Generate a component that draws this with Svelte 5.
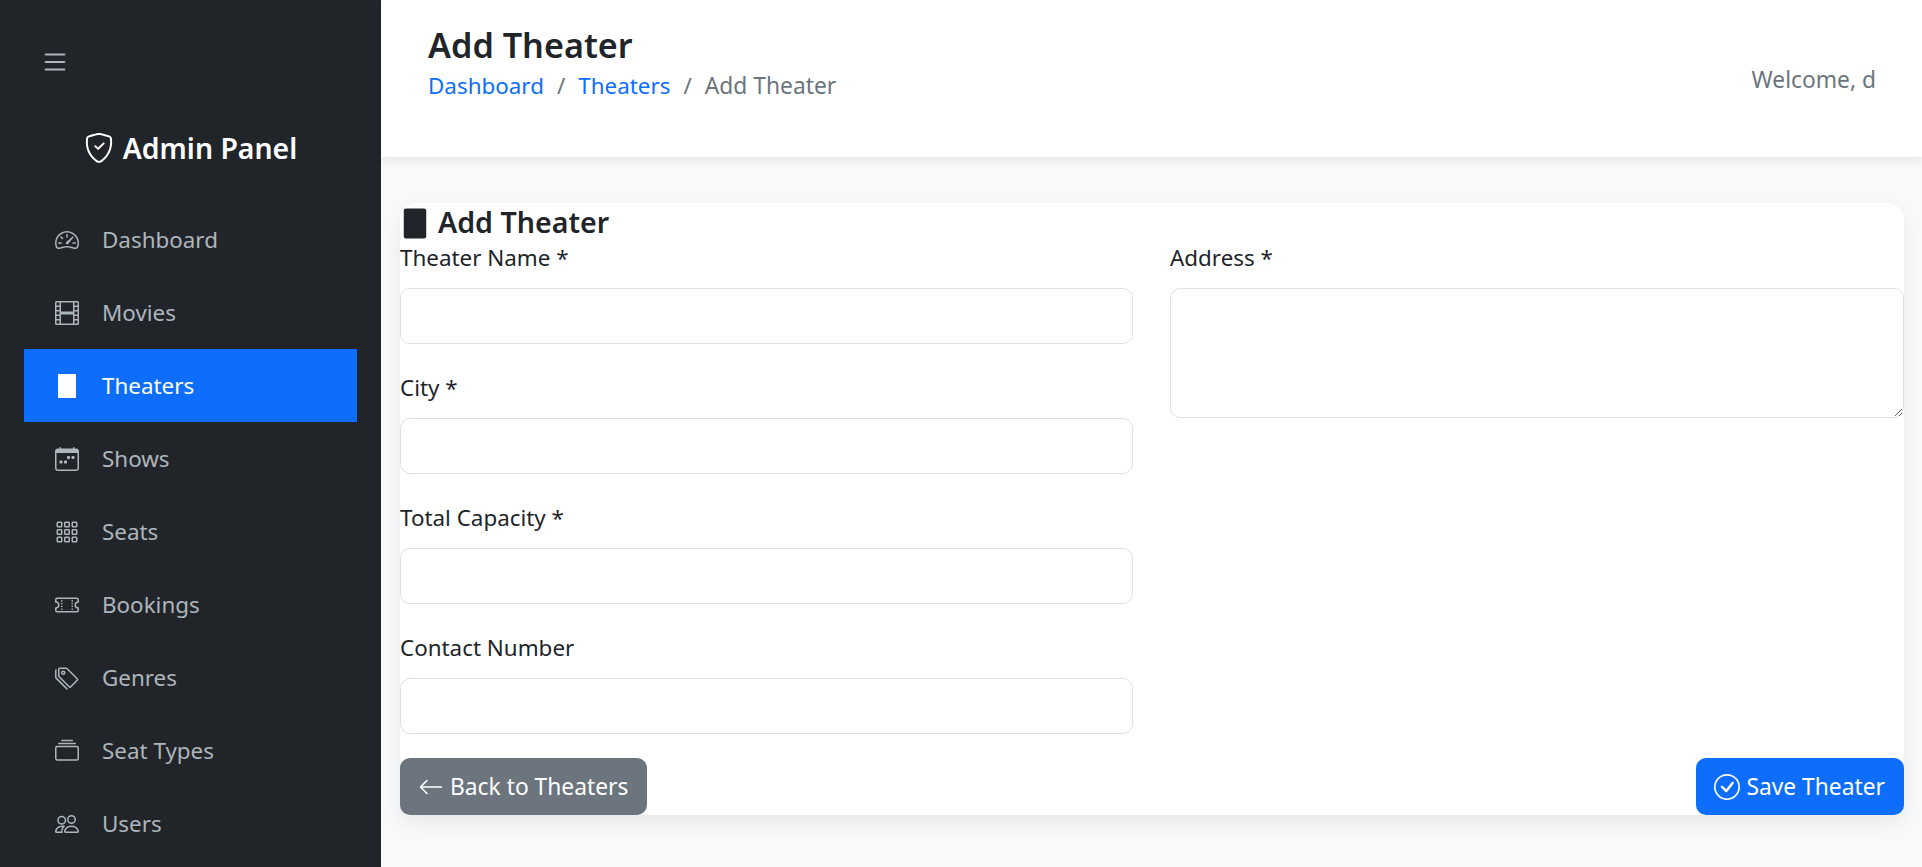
<script lang="ts">
  const NAV = [
    { label: 'Dashboard', paths: ['M8 4a.5.5 0 0 1 .5.5V6a.5.5 0 0 1-1 0V4.5A.5.5 0 0 1 8 4M3.732 5.732a.5.5 0 0 1 .707 0l.915.914a.5.5 0 1 1-.708.708l-.914-.915a.5.5 0 0 1 0-.707M2 10a.5.5 0 0 1 .5-.5h1.586a.5.5 0 0 1 0 1H2.5A.5.5 0 0 1 2 10m9.5 0a.5.5 0 0 1 .5-.5h1.5a.5.5 0 0 1 0 1H12a.5.5 0 0 1-.5-.5m.754-4.246a.39.39 0 0 0-.527-.02L7.547 9.31a.91.91 0 1 0 1.302 1.258l3.434-4.297a.39.39 0 0 0-.029-.518z', 'M0 10a8 8 0 1 1 15.547 2.661c-.442 1.253-1.845 1.602-2.932 1.25C11.309 13.488 9.475 13 8 13c-1.474 0-3.31.488-4.615.911-1.087.352-2.49.003-2.932-1.25A8 8 0 0 1 0 10m8-7a7 7 0 0 0-6.603 9.329c.203.575.923.876 1.68.63C4.397 12.533 6.358 12 8 12s3.604.532 4.923.96c.757.245 1.477-.056 1.68-.631A7 7 0 0 0 8 3'] },
    { label: 'Movies', paths: ['M0 1a1 1 0 0 1 1-1h14a1 1 0 0 1 1 1v14a1 1 0 0 1-1 1H1a1 1 0 0 1-1-1zm4 0v6h8V1zm8 8H4v6h8zM1 1v2h2V1zm2 3H1v2h2zM1 7v2h2V7zm2 3H1v2h2zm-2 3v2h2v-2zM15 1h-2v2h2zm-2 3v2h2V4zm2 3h-2v2h2zm-2 3v2h2v-2zm2 3h-2v2h2z'] },
    { label: 'Theaters', active: true, paths: ['M2.4 0h11.2a.4.4 0 0 1 .4.4v15.2a.4.4 0 0 1-.4.4H2.4a.4.4 0 0 1-.4-.4V.4a.4.4 0 0 1 .4-.4z'] },
    { label: 'Shows', paths: ['M11 6.5a.5.5 0 0 1 .5-.5h1a.5.5 0 0 1 .5.5v1a.5.5 0 0 1-.5.5h-1a.5.5 0 0 1-.5-.5zm-3 0a.5.5 0 0 1 .5-.5h1a.5.5 0 0 1 .5.5v1a.5.5 0 0 1-.5.5h-1a.5.5 0 0 1-.5-.5zm-5 3a.5.5 0 0 1 .5-.5h1a.5.5 0 0 1 .5.5v1a.5.5 0 0 1-.5.5h-1a.5.5 0 0 1-.5-.5zm3 0a.5.5 0 0 1 .5-.5h1a.5.5 0 0 1 .5.5v1a.5.5 0 0 1-.5.5h-1a.5.5 0 0 1-.5-.5z', 'M3.5 0a.5.5 0 0 1 .5.5V1h8V.5a.5.5 0 0 1 1 0V1h1a2 2 0 0 1 2 2v11a2 2 0 0 1-2 2H2a2 2 0 0 1-2-2V3a2 2 0 0 1 2-2h1V.5a.5.5 0 0 1 .5-.5M1 4v10a1 1 0 0 0 1 1h12a1 1 0 0 0 1-1V4z'] },
    { label: 'Seats', paths: ['M4 2v2H2V2zm1 12v-2a1 1 0 0 0-1-1H2a1 1 0 0 0-1 1v2a1 1 0 0 0 1 1h2a1 1 0 0 0 1-1m0-5V7a1 1 0 0 0-1-1H2a1 1 0 0 0-1 1v2a1 1 0 0 0 1 1h2a1 1 0 0 0 1-1m0-5V2a1 1 0 0 0-1-1H2a1 1 0 0 0-1 1v2a1 1 0 0 0 1 1h2a1 1 0 0 0 1-1m5 10v-2a1 1 0 0 0-1-1H7a1 1 0 0 0-1 1v2a1 1 0 0 0 1 1h2a1 1 0 0 0 1-1m0-5V7a1 1 0 0 0-1-1H7a1 1 0 0 0-1 1v2a1 1 0 0 0 1 1h2a1 1 0 0 0 1-1m0-5V2a1 1 0 0 0-1-1H7a1 1 0 0 0-1 1v2a1 1 0 0 0 1 1h2a1 1 0 0 0 1-1M9 2v2H7V2zm5 0v2h-2V2zM4 7v2H2V7zm5 0v2H7V7zm5 0h-2v2h2zM4 12v2H2v-2zm5 0v2H7v-2zm5 0v2h-2v-2zM12 1a1 1 0 0 0-1 1v2a1 1 0 0 0 1 1h2a1 1 0 0 0 1-1V2a1 1 0 0 0-1-1zm-1 6a1 1 0 0 1 1-1h2a1 1 0 0 1 1 1v2a1 1 0 0 1-1 1h-2a1 1 0 0 1-1-1zm1 4a1 1 0 0 0-1 1v2a1 1 0 0 0 1 1h2a1 1 0 0 0 1-1v-2a1 1 0 0 0-1-1z'] },
    { label: 'Bookings', paths: ['M4 4.85v.9h1v-.9zm7 0v.9h1v-.9zm-7 1.8v.9h1v-.9zm7 0v.9h1v-.9zm-7 1.8v.9h1v-.9zm7 0v.9h1v-.9zm-7 1.8v.9h1v-.9zm7 0v.9h1v-.9z', 'M1.5 3A1.5 1.5 0 0 0 0 4.5V6a.5.5 0 0 0 .5.5 1.5 1.5 0 1 1 0 3 .5.5 0 0 0-.5.5v1.5A1.5 1.5 0 0 0 1.5 13h13a1.5 1.5 0 0 0 1.5-1.5V10a.5.5 0 0 0-.5-.5 1.5 1.5 0 0 1 0-3A.5.5 0 0 0 16 6V4.5A1.5 1.5 0 0 0 14.5 3zM1 4.5a.5.5 0 0 1 .5-.5h13a.5.5 0 0 1 .5.5v1.05a2.5 2.5 0 0 0 0 4.9v1.05a.5.5 0 0 1-.5.5h-13a.5.5 0 0 1-.5-.5v-1.05a2.5 2.5 0 0 0 0-4.9z'] },
    { label: 'Genres', paths: ['M3 2v4.586l7 7L14.586 9l-7-7zM2 2a1 1 0 0 1 1-1h4.586a1 1 0 0 1 .707.293l7 7a1 1 0 0 1 0 1.414l-4.586 4.586a1 1 0 0 1-1.414 0l-7-7A1 1 0 0 1 2 6.586z', 'M5.5 5a.5.5 0 1 1 0-1 .5.5 0 0 1 0 1m0 1a1.5 1.5 0 1 0 0-3 1.5 1.5 0 0 0 0 3M1 7.086a1 1 0 0 0 .293.707L8.75 15.25l-.043.043a1 1 0 0 1-1.414 0l-7-7A1 1 0 0 1 0 7.586V3a1 1 0 0 1 1-1z'] },
    { label: 'Seat Types', paths: ['M2.5 3.5a.5.5 0 0 1 0-1h11a.5.5 0 0 1 0 1zm2-2a.5.5 0 0 1 0-1h7a.5.5 0 0 1 0 1zM0 13a1.5 1.5 0 0 0 1.5 1.5h13A1.5 1.5 0 0 0 16 13V6a1.5 1.5 0 0 0-1.5-1.5h-13A1.5 1.5 0 0 0 0 6zm1.5.5A.5.5 0 0 1 1 13V6a.5.5 0 0 1 .5-.5h13a.5.5 0 0 1 .5.5v7a.5.5 0 0 1-.5.5z'] },
    { label: 'Users', paths: ['M15 14s1 0 1-1-1-4-5-4-5 3-5 4 1 1 1 1zm-7.978-1L7 12.996c.001-.264.167-1.03.76-1.72C8.312 10.629 9.282 10 11 10c1.717 0 2.687.63 3.24 1.276.593.69.758 1.457.76 1.72l-.008.002-.014.002zM11 7a2 2 0 1 0 0-4 2 2 0 0 0 0 4m3-2a3 3 0 1 1-6 0 3 3 0 0 1 6 0M6.936 9.28a6 6 0 0 0-1.23-.247A7 7 0 0 0 5 9c-4 0-5 3-5 4q0 1 1 1h4.216A2.24 2.24 0 0 1 5 13c0-1.01.377-2.042 1.09-2.904.243-.294.526-.569.846-.816M4.92 10A5.5 5.5 0 0 0 4 13H1c0-.26.164-1.03.76-1.724.545-.636 1.492-1.256 3.16-1.275ZM1.5 5.5a3 3 0 1 1 6 0 3 3 0 0 1-6 0m3-2a2 2 0 1 0 0 4 2 2 0 0 0 0-4'] },
  ]

  const LEFT_FIELDS = ['Theater Name *', 'City *', 'Total Capacity *', 'Contact Number']
</script>

<div class="layout">
  <aside class="sidebar">
    <button class="toggle" aria-label="Toggle menu">
      <svg viewBox="0 0 16 16" fill="currentColor" width="30" height="30"><path fill-rule="evenodd" d="M2.5 12a.5.5 0 0 1 .5-.5h10a.5.5 0 0 1 0 1H3a.5.5 0 0 1-.5-.5m0-4a.5.5 0 0 1 .5-.5h10a.5.5 0 0 1 0 1H3a.5.5 0 0 1-.5-.5m0-4a.5.5 0 0 1 .5-.5h10a.5.5 0 0 1 0 1H3a.5.5 0 0 1-.5-.5"/></svg>
    </button>
    <div class="brand">
      <svg viewBox="0 0 16 16" fill="currentColor" width="30" height="30">
        <path d="M5.338 1.59a61 61 0 0 0-2.837.856.48.48 0 0 0-.328.39c-.554 4.157.726 7.19 2.253 9.188a10.7 10.7 0 0 0 2.287 2.233c.346.244.652.42.893.533q.18.085.293.118a1 1 0 0 0 .101.025 1 1 0 0 0 .1-.025q.114-.034.294-.118c.24-.113.547-.29.893-.533a10.7 10.7 0 0 0 2.287-2.233c1.527-1.997 2.807-5.031 2.253-9.188a.48.48 0 0 0-.328-.39c-.651-.213-1.75-.56-2.837-.855C9.552 1.29 8.531 1.067 8 1.067c-.53 0-1.552.223-2.662.524zM5.072.56C6.157.265 7.31 0 8 0s1.843.265 2.928.56c1.11.3 2.229.655 2.887.87a1.54 1.54 0 0 1 1.044 1.262c.596 4.477-.787 7.795-2.465 9.99a11.8 11.8 0 0 1-2.517 2.453 7 7 0 0 1-1.048.625c-.28.132-.581.24-.829.24s-.548-.108-.829-.24a7 7 0 0 1-1.048-.625 11.8 11.8 0 0 1-2.517-2.453C1.928 10.487.545 7.169 1.141 2.692A1.54 1.54 0 0 1 2.185 1.43 63 63 0 0 1 5.072.56"/>
        <path d="M10.854 5.146a.5.5 0 0 1 0 .708l-3 3a.5.5 0 0 1-.708 0l-1.5-1.5a.5.5 0 1 1 .708-.708L7.5 7.793l2.646-2.647a.5.5 0 0 1 .708 0"/>
      </svg>
      <span>Admin Panel</span>
    </div>
    <nav class="nav">
      {#each NAV as item}
        <a href="#top" class="nav-link" class:active={item.active}>
          <svg viewBox="0 0 16 16" fill="currentColor" width="24" height="24">
            {#each item.paths as d}<path {d} />{/each}
          </svg>
          <span>{item.label}</span>
        </a>
      {/each}
    </nav>
  </aside>

  <main class="main">
    <header class="topbar">
      <div>
        <h1>Add Theater</h1>
        <div class="crumbs">
          <a href="#top">Dashboard</a>
          <span class="sep">/</span>
          <a href="#top">Theaters</a>
          <span class="sep">/</span>
          <span class="current">Add Theater</span>
        </div>
      </div>
      <div class="welcome">Welcome, d</div>
    </header>

    <div class="content">
      <form class="card" onsubmit={(e) => e.preventDefault()}>
        <h2>
          <svg viewBox="0 0 16 20" fill="currentColor" width="24" height="31"><rect x="0.5" y="0" width="15" height="20" rx="1.4"/></svg>
          <span>Add Theater</span>
        </h2>
        <div class="columns">
          <div>
            {#each LEFT_FIELDS as label}
              <div class="field">
                <label>
                  <span>{label}</span>
                  <input type="text" />
                </label>
              </div>
            {/each}
          </div>
          <div>
            <div class="field">
              <label>
                <span>Address *</span>
                <textarea></textarea>
              </label>
            </div>
          </div>
        </div>
        <div class="actions">
          <button type="button" class="btn secondary">
            <svg viewBox="0 0 16 16" fill="currentColor" width="26" height="26"><path fill-rule="evenodd" d="M15 8a.5.5 0 0 0-.5-.5H2.707l3.147-3.146a.5.5 0 1 0-.708-.708l-4 4a.5.5 0 0 0 0 .708l4 4a.5.5 0 0 0 .708-.708L2.707 8.5H14.5A.5.5 0 0 0 15 8"/></svg>
            Back to Theaters
          </button>
          <button type="submit" class="btn primary">
            <svg viewBox="0 0 16 16" fill="currentColor" width="26" height="26"><path d="M8 15A7 7 0 1 1 8 1a7 7 0 0 1 0 14m0 1A8 8 0 1 0 8 0a8 8 0 0 0 0 16"/><path d="m10.97 4.97-.02.022L7.477 9.417 5.384 7.323a.75.75 0 0 0-1.06 1.06L6.97 11.03a.75.75 0 0 0 1.079-.02l3.992-4.99a.75.75 0 0 0-1.071-1.05"/></svg>
            Save Theater
          </button>
        </div>
      </form>
    </div>
  </main>
</div>

<style>
  :global(body) {
    margin: 0;
    background: #f8f9fa;
    font-family: "Noto Sans", "Open Sans", sans-serif;
    font-size: 22.4px;
    line-height: 30px;
    color: #212529;
  }

  .layout {
    display: flex;
    height: 867px;
    overflow: hidden;
  }

  .sidebar {
    width: 381px;
    flex: none;
    background: #212529;
    color: #adb5bd;
    box-sizing: border-box;
    padding: 47px 24px 0;
  }

  .toggle {
    display: block;
    padding: 0;
    margin-left: 16px;
    width: 30px;
    height: 30px;
    border: none;
    background: none;
    color: #adb5bd;
  }

  .brand {
    display: flex;
    justify-content: center;
    align-items: center;
    gap: 9px;
    margin-top: 51px;
    color: #fff;
    font-size: 28.4px;
    font-weight: 600;
    line-height: 40px;
  }

  .nav {
    display: flex;
    flex-direction: column;
    margin-top: 35px;
  }

  .nav-link {
    display: flex;
    align-items: center;
    gap: 23px;
    height: 73.1px;
    padding-left: 31px;
    color: #adb5bd;
    text-decoration: none;
    flex: none;
  }

  .nav-link.active {
    background: #0d6efd;
    color: #fff;
  }

  .main {
    flex: 1;
    min-width: 0;
  }

  .topbar {
    display: flex;
    justify-content: space-between;
    align-items: flex-start;
    height: 157px;
    box-sizing: border-box;
    padding: 22px 46px 0 47px;
    background: #fff;
    box-shadow: 0 2px 10px rgba(0, 0, 0, 0.1);
    position: relative;
  }

  h1 {
    margin: 0 0 3px;
    font-size: 34.2px;
    font-weight: 600;
    line-height: 46px;
  }

  .crumbs {
    display: flex;
    gap: 13px;
  }

  .crumbs a {
    color: #0d6efd;
    text-decoration: none;
  }

  .current {
    font-size: 22.8px;
  }

  .sep,
  .current,
  .welcome {
    color: #6c757d;
  }

  .welcome {
    margin-top: 43px;
    font-size: 22.8px;
  }

  .content {
    padding: 46px 18px 0 19px;
  }

  .card {
    background: #fff;
    border-radius: 16px;
    box-shadow: 0 8px 20px rgba(0, 0, 0, 0.07);
  }

  h2 {
    display: flex;
    align-items: center;
    gap: 11px;
    margin: 0;
    padding-left: 3px;
    height: 41px;
    font-size: 28.6px;
    font-weight: 600;
    line-height: 40px;
  }

  h2 span {
    margin-bottom: 4px;
  }

  .columns {
    display: grid;
    grid-template-columns: 733px 734px;
    gap: 37px;
  }

  .field {
    margin-bottom: 30px;
  }

  label span {
    display: block;
    line-height: 28px;
    margin-bottom: 16px;
  }

  input,
  textarea {
    display: block;
    width: 100%;
    box-sizing: border-box;
    border: 1px solid #dee2e6;
    border-radius: 10px;
    background: #fff;
    font: inherit;
  }

  input {
    height: 56px;
  }

  textarea {
    height: 130px;
    resize: vertical;
  }

  .actions {
    display: flex;
    justify-content: space-between;
    margin-top: -6px;
  }

  .btn {
    display: flex;
    align-items: center;
    gap: 6px;
    height: 57px;
    padding: 0 19px 0 18px;
    border: none;
    border-radius: 10px;
    color: #fff;
    font: inherit;
    font-size: 22.8px;
  }

  .secondary {
    background: #6c757d;
  }

  .primary {
    background: #0d6efd;
  }
</style>
